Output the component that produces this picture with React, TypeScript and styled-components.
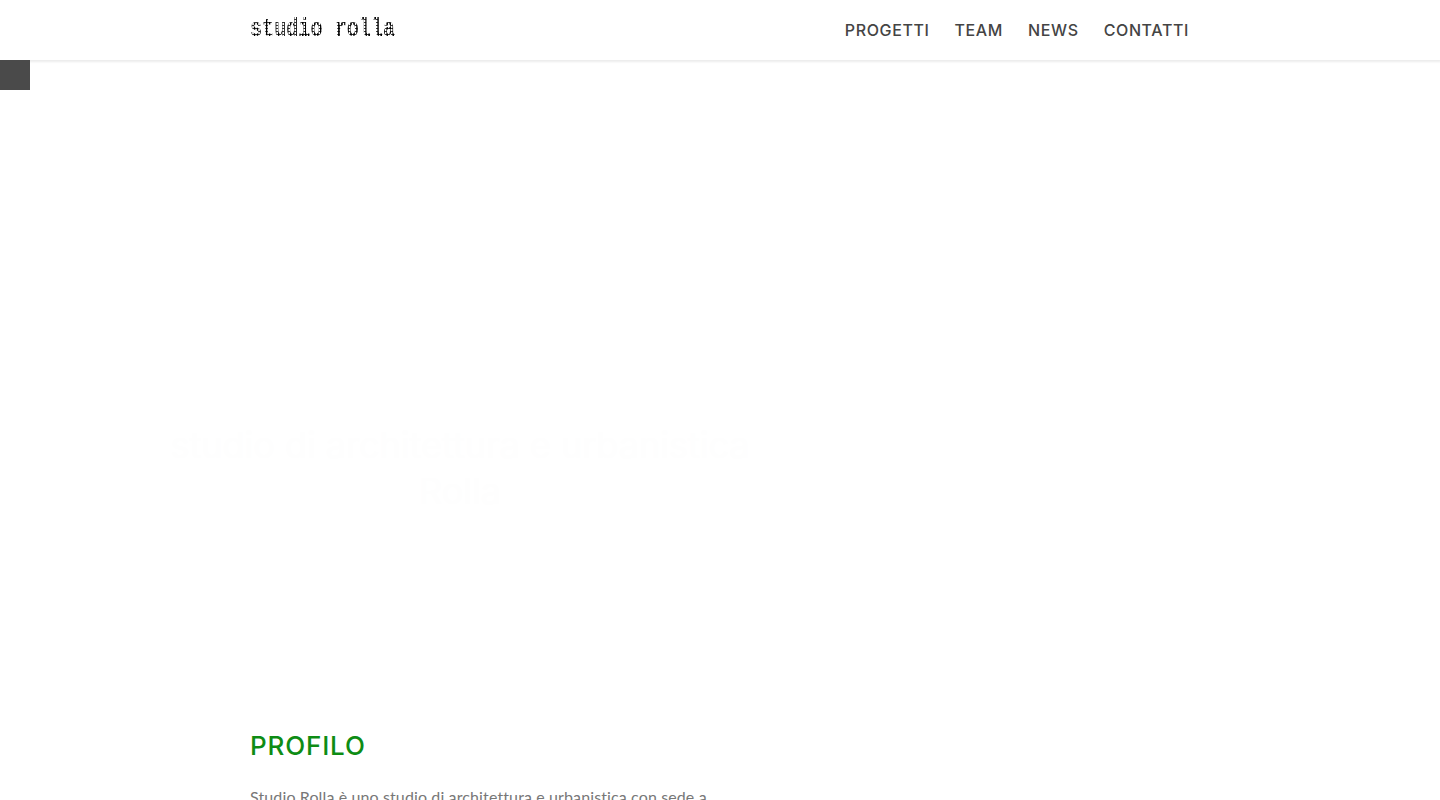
import React from "react";
import styled, { createGlobalStyle } from "styled-components";

const GlobalStyle = createGlobalStyle`
  html, body {
    margin: 0;
    height: 800px;
    overflow: hidden;
    background: #fff;
    font-family: "Lato", "Liberation Sans", sans-serif;
  }
`;

const Header = styled.header`
  height: 60px;
  background: #fff;
  box-shadow: 0 1px 2px 1px #ececec;
  position: relative;
  z-index: 2;
`;

const HeaderInner = styled.div`
  width: 940px;
  height: 60px;
  margin: 0 auto;
  display: flex;
  align-items: center;
  justify-content: space-between;
`;

const LogoBox = styled.div`
  width: 146px;
  height: 28px;
  margin-top: -3px;
`;

const Logo = styled.a`
  display: inline-block;
  font-family: "Liberation Mono", monospace;
  font-weight: 700;
  font-size: 26px;
  line-height: 28px;
  white-space: nowrap;
  color: transparent;
  background-image: radial-gradient(ellipse, #000 50%, transparent 64%);
  background-size: 3.9px 3px;
  -webkit-background-clip: text;
  background-clip: text;
  transform: scaleX(0.775);
  transform-origin: left center;
`;

const Nav = styled.nav`
  display: flex;
  gap: 25px;
  margin-right: 1px;
`;

const NavLink = styled.a`
  font-family: "Inter", sans-serif;
  font-weight: 500;
  font-size: 16px;
  letter-spacing: 0.62px;
  color: #444;
`;

const SideTab = styled.div`
  width: 30px;
  height: 30px;
  background: #4a4a4a;
  position: absolute;
  top: 60px;
  left: 0;
  z-index: 3;
`;

const Hero = styled.section`
  height: 640px;
  padding: 0 0 0 170px;
  display: flex;
  flex-direction: column;
  justify-content: flex-end;
`;

const HeroTitle = styled.h1`
  width: 580px;
  margin: 0 0 186px;
  font-family: "Inter", sans-serif;
  font-weight: 400;
  font-size: 36px;
  line-height: 46px;
  text-align: center;
  white-space: nowrap;
  color: #fefefe;
`;

const Content = styled.main`
  width: 940px;
  margin: 0 auto;
`;

const SectionTitle = styled.h2`
  margin: 28px 0 0;
  font-family: "Inter", sans-serif;
  font-weight: 500;
  font-size: 26px;
  letter-spacing: 0.85px;
  line-height: 36px;
  color: #0e8c14;
`;

const Paragraph = styled.p`
  margin: 21px 0 0;
  width: 470px;
  font-size: 16px;
  letter-spacing: 0.12px;
  line-height: 24px;
  white-space: nowrap;
  color: #777;
`;

const App: React.FC = () => {
  return (
    <>
      <GlobalStyle />
      <Header>
        <HeaderInner>
          <LogoBox>
            <Logo>studio rolla</Logo>
          </LogoBox>
          <Nav>
            <NavLink>PROGETTI</NavLink>
            <NavLink>TEAM</NavLink>
            <NavLink>NEWS</NavLink>
            <NavLink>CONTATTI</NavLink>
          </Nav>
        </HeaderInner>
      </Header>
      <SideTab />
      <Hero>
        <HeroTitle>
          studio di architettura e urbanistica
          <br />
          Rolla
        </HeroTitle>
      </Hero>
      <Content>
        <SectionTitle>PROFILO</SectionTitle>
        <Paragraph>Studio Rolla è uno studio di architettura e urbanistica con sede a</Paragraph>
      </Content>
    </>
  );
};

export default App;
